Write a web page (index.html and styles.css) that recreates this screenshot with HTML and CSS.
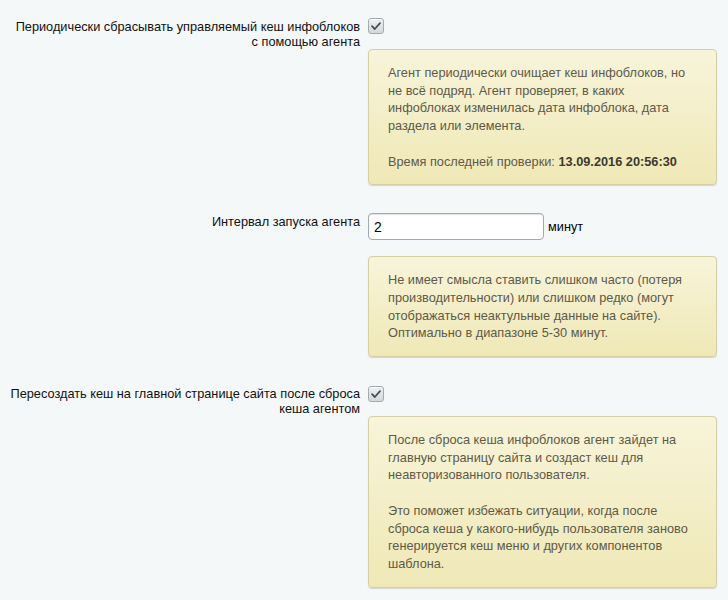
FILE: index.html
```html
<!DOCTYPE html>
<html lang="ru">
<head>
<meta charset="utf-8">
<title>Настройки кеша</title>
<link rel="stylesheet" href="styles.css">
</head>
<body>
<div class="form">
  <div class="row row-first">
    <div class="label">Периодически сбрасывать управляемый кеш инфоблоков<br>с помощью агента</div>
    <div class="value"><span class="check"><svg viewBox="0 0 16 16" width="16" height="16"><path d="M4 8.2 L6.8 11 L12 5.2" fill="none" stroke="#4a4f52" stroke-width="1.8" stroke-linecap="round" stroke-linejoin="round"/></svg></span></div>
  </div>
  <div class="row row-note">
    <div class="label"></div>
    <div class="value">
      <div class="note">
        Агент периодически очищает кеш инфоблоков, но не всё подряд. Агент проверяет, в каких инфоблоках изменилась дата инфоблока, дата раздела или элемента.<br><br>Время последней проверки: <b>13.09.2016 20:56:30</b>
      </div>
    </div>
  </div>
  <div class="row row-input">
    <div class="label">Интервал запуска агента</div>
    <div class="value inline"><input class="text" type="text" value="2"><span class="unit">минут</span></div>
  </div>
  <div class="row row-note2">
    <div class="label"></div>
    <div class="value">
      <div class="note">
        Не имеет смысла ставить слишком часто (потеря производительности) или слишком редко (могут отображаться неактульные данные на сайте). Оптимально в диапазоне 5-30 минут.
      </div>
    </div>
  </div>
  <div class="row row-third">
    <div class="label">Пересоздать кеш на главной странице сайта после сброса<br>кеша агентом</div>
    <div class="value"><span class="check"><svg viewBox="0 0 16 16" width="16" height="16"><path d="M4 8.2 L6.8 11 L12 5.2" fill="none" stroke="#4a4f52" stroke-width="1.8" stroke-linecap="round" stroke-linejoin="round"/></svg></span></div>
  </div>
  <div class="row row-note">
    <div class="label"></div>
    <div class="value">
      <div class="note">
        После сброса кеша инфоблоков агент зайдет на главную страницу сайта и создаст кеш для неавторизованного пользователя.<br><br>Это поможет избежать ситуации, когда после сброса кеша у какого-нибудь пользователя заново генерируется кеш меню и других компонентов шаблона.
      </div>
    </div>
  </div>
</div>
</body>
</html>
```

FILE: styles.css
```css
html, body {
  margin: 0;
  padding: 0;
  background: #f5f8f9;
}
body {
  font-family: "Liberation Sans", Arial, sans-serif;
  font-size: 12.75px;
  color: #000;
  width: 728px;
  height: 600px;
  overflow: hidden;
}
.form {
  display: flex;
  flex-direction: column;
}
.row {
  display: grid;
  grid-template-columns: 360px 1fr;
  column-gap: 8px;
  padding-right: 11px;
}
.label {
  text-align: right;
  line-height: 15px;
  color: #111;
}
.row-first { padding-top: 18px; }
.row-first .label { padding-top: 1px; }
.row-input { margin-top: 28px; }
.row-input .label { padding-top: 1px; }
.row-note2 { margin-top: 16px; }
.row-third { margin-top: 29px; }
.row-third .label { padding-top: 0; }

.check {
  display: block;
  width: 14px;
  height: 14px;
  border: 1px solid #a4abae;
  border-radius: 3px;
  background: linear-gradient(#eef1f2, #d3d8da);
  box-shadow: inset 0 1px 0 #fff;
  position: relative;
}
.check svg {
  position: absolute;
  left: -1px;
  top: -1px;
}

.inline {
  display: flex;
  align-items: flex-start;
}
.text {
  box-sizing: border-box;
  width: 176px;
  height: 27px;
  margin: 0;
  padding: 0 5px;
  border: 1px solid #a1aaad;
  border-radius: 4px;
  background: #fff;
  box-shadow: inset 0 1px 1px rgba(0,0,0,0.12);
  font-family: "Liberation Sans", Arial, sans-serif;
  font-size: 14px;
  color: #000;
  outline: none;
}
.unit {
  margin-left: 4px;
  padding-top: 6px;
  line-height: 15px;
}

.note {
  border: 1px solid #d6cfa5;
  border-radius: 4px;
  background: linear-gradient(#f8f4da, #efe8b6);
  box-shadow: 0 1px 1px rgba(120,110,60,0.25);
  padding: 14px 19px 14px 19px;
  line-height: 17.7px;
  color: #5d5a48;
}
.note b {
  color: #3c3a2e;
}
```
